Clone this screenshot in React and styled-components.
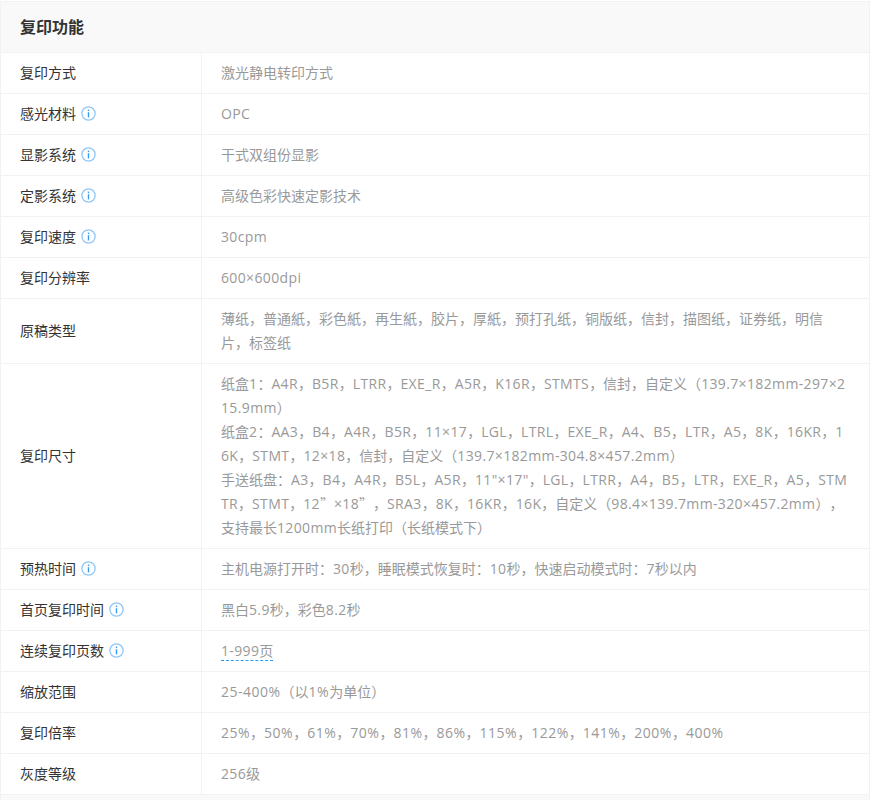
import styled, { createGlobalStyle } from "styled-components"

const GlobalStyle = createGlobalStyle`
    html, body {
        margin: 0;
        padding: 0;
        background: #fff;
        font-family: "Open Sans", "Noto Sans CJK SC", sans-serif;
    }
`

const Page = styled.div`
    width: 870px;
    height: 800px;
    overflow: hidden;
    box-sizing: border-box;
    padding-top: 1px;
    background: #fff;
`

const Table = styled.div`
    height: 799px;
    box-sizing: border-box;
    border: 1px solid #f2f2f2;
    border-bottom: none;
    background: #f9f9f9;
`

const Heading = styled.h2`
    margin: 0;
    height: 51px;
    box-sizing: border-box;
    padding: 0 0 2px 19px;
    display: flex;
    align-items: center;
    font-size: 16px;
    font-weight: 700;
    color: #333;
    background: #f9f9f9;
    border-bottom: 1px solid #f2f2f2;
`

const Row = styled.div`
    display: grid;
    grid-template-columns: 201px 1fr;
    background: #fff;
    border-bottom: 1px solid #f2f2f2;
`

const Label = styled.div`
    display: flex;
    align-items: center;
    gap: 5px;
    padding: 0 0 2px 19px;
    border-right: 1px solid #f2f2f2;
    font-size: 14px;
    color: #333;
`

const Value = styled.div`
    padding: 8px 20px 8px 19px;
    font-size: 14px;
    line-height: 24px;
    color: #999;
    word-break: break-all;
    text-spacing-trim: space-all;
`

const Line = styled.div``

const Dashed = styled.span`
    display: inline-block;
    line-height: 18px;
    border-bottom: 1px dashed #1e9fff;
`

const Latin = styled.span`
    letter-spacing: ${(props) => (props.$wide ? "0.5px" : "0.36px")};
`

const Quote = styled.span`
    font-family: "Noto Sans CJK SC", sans-serif;
    line-height: 1;
`

const InfoIcon = () => (
    <svg width="15" height="15" viewBox="0 0 15 15" fill="none">
        <circle cx="7.5" cy="7.5" r="6.6" stroke="#8fc7f7" strokeWidth="1.3" />
        <rect x="6.8" y="3.6" width="1.4" height="1.5" fill="#3a9bef" />
        <rect x="6.8" y="6.2" width="1.4" height="5.2" fill="#3a9bef" />
    </svg>
)

// latin runs sit a little wider than the font gives, the quotes are full width
const renderText = (text) =>
    text.split(/([\x21-\x7e×]+|”)/).map((part, i) => {
        if (part === "”") return <Quote key={i}>{part}</Quote>
        return i % 2 ? <Latin key={i} $wide={part.includes("%")}>{part}</Latin> : part
    })

const rows = [
    { label: "复印方式", lines: ["激光静电转印方式"] },
    { label: "感光材料", info: true, lines: ["OPC"] },
    { label: "显影系统", info: true, lines: ["干式双组份显影"] },
    { label: "定影系统", info: true, lines: ["高级色彩快速定影技术"] },
    { label: "复印速度", info: true, lines: ["30cpm"] },
    { label: "复印分辨率", lines: ["600×600dpi"] },
    { label: "原稿类型", lines: ["薄纸，普通紙，彩色紙，再生紙，胶片，厚紙，预打孔纸，铜版纸，信封，描图纸，证券纸，明信片，标签纸"] },
    {
        label: "复印尺寸",
        lines: [
            "纸盒1：A4R，B5R，LTRR，EXE_R，A5R，K16R，STMTS，信封，自定义（139.7×182mm-297×215.9mm）",
            "纸盒2：AA3，B4，A4R，B5R，11×17，LGL，LTRL，EXE_R，A4、B5，LTR，A5，8K，16KR，16K，STMT，12×18，信封，自定义（139.7×182mm-304.8×457.2mm）",
            "手送纸盘：A3，B4，A4R，B5L，A5R，11\"×17\"，LGL，LTRR，A4，B5，LTR，EXE_R，A5，STMTR，STMT，12”×18”，SRA3，8K，16KR，16K，自定义（98.4×139.7mm-320×457.2mm），支持最长1200mm长纸打印（长纸模式下）",
        ],
    },
    { label: "预热时间", info: true, lines: ["主机电源打开时：30秒，睡眠模式恢复时：10秒，快速启动模式时：7秒以内"] },
    { label: "首页复印时间", info: true, lines: ["黑白5.9秒，彩色8.2秒"] },
    { label: "连续复印页数", info: true, dashed: true, lines: ["1-999页"] },
    { label: "缩放范围", lines: ["25-400%（以1%为单位）"] },
    { label: "复印倍率", lines: ["25%，50%，61%，70%，81%，86%，115%，122%，141%，200%，400%"] },
    { label: "灰度等级", lines: ["256级"] },
]

const App = () => {
    return (
        <Page>
            <GlobalStyle />
            <Table>
                <Heading>复印功能</Heading>
                {rows.map((row) => (
                    <Row key={row.label}>
                        <Label>
                            {row.label}
                            {row.info && <InfoIcon />}
                        </Label>
                        <Value>
                            {row.lines.map((line) => (
                                <Line key={line}>
                                    {row.dashed ? <Dashed>{renderText(line)}</Dashed> : renderText(line)}
                                </Line>
                            ))}
                        </Value>
                    </Row>
                ))}
            </Table>
        </Page>
    )
}

export default App
